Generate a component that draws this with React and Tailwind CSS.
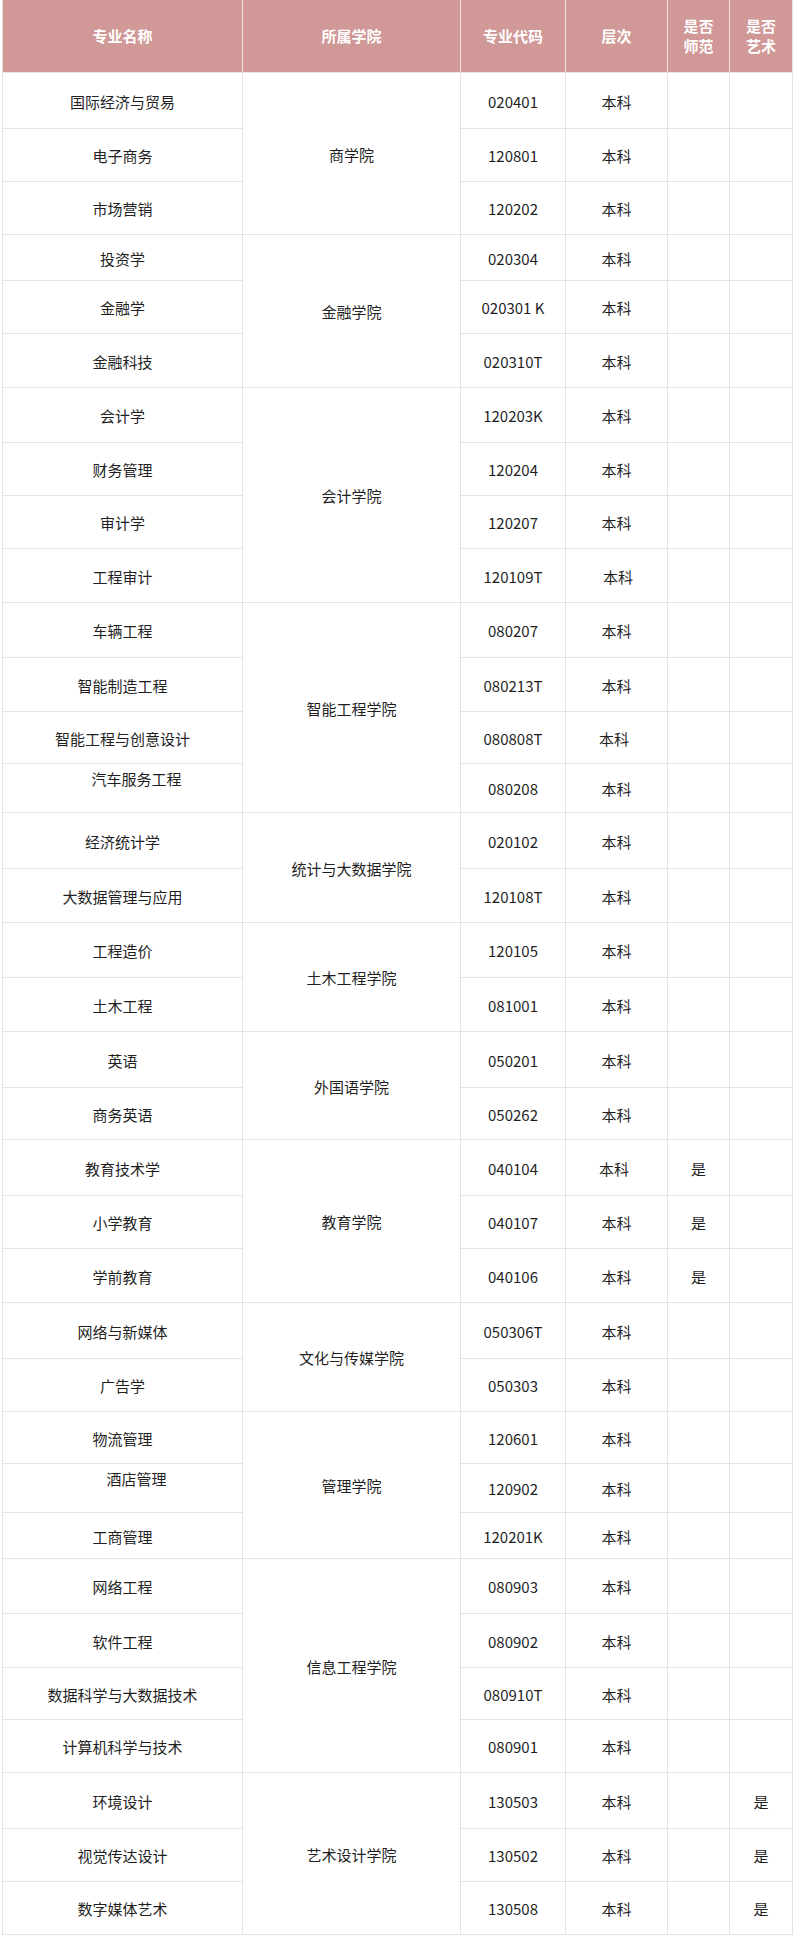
import React from "react";

// 学院分组：[专业名称, 专业代码, 行高, 师范, 艺术, 名称偏移, 层次偏移]
const groups = [
  {
    college: "商学院",
    rows: [
      { name: "国际经济与贸易", code: "020401", h: 56 },
      { name: "电子商务", code: "120801", h: 53 },
      { name: "市场营销", code: "120202", h: 53 },
    ],
  },
  {
    college: "金融学院",
    rows: [
      { name: "投资学", code: "020304", h: 46 },
      { name: "金融学", code: "020301 K", h: 53 },
      { name: "金融科技", code: "020310T", h: 54 },
    ],
  },
  {
    college: "会计学院",
    rows: [
      { name: "会计学", code: "120203K", h: 55 },
      { name: "财务管理", code: "120204", h: 53 },
      { name: "审计学", code: "120207", h: 53 },
      { name: "工程审计", code: "120109T", h: 54, levelShift: "pl-[3px]" },
    ],
  },
  {
    college: "智能工程学院",
    rows: [
      { name: "车辆工程", code: "080207", h: 55 },
      { name: "智能制造工程", code: "080213T", h: 54 },
      { name: "智能工程与创意设计", code: "080808T", h: 52, levelShift: "pr-[5px]" },
      { name: "汽车服务工程", code: "080208", h: 49, nameShift: "pl-[28px] pb-[20px]" },
    ],
  },
  {
    college: "统计与大数据学院",
    rows: [
      { name: "经济统计学", code: "020102", h: 56 },
      { name: "大数据管理与应用", code: "120108T", h: 54 },
    ],
  },
  {
    college: "土木工程学院",
    rows: [
      { name: "工程造价", code: "120105", h: 55 },
      { name: "土木工程", code: "081001", h: 54 },
    ],
  },
  {
    college: "外国语学院",
    rows: [
      { name: "英语", code: "050201", h: 56 },
      { name: "商务英语", code: "050262", h: 52 },
    ],
  },
  {
    college: "教育学院",
    rows: [
      { name: "教育技术学", code: "040104", h: 56, teacher: true, levelShift: "pr-[5px]" },
      { name: "小学教育", code: "040107", h: 53, teacher: true },
      { name: "学前教育", code: "040106", h: 54, teacher: true },
    ],
  },
  {
    college: "文化与传媒学院",
    rows: [
      { name: "网络与新媒体", code: "050306T", h: 56 },
      { name: "广告学", code: "050303", h: 53 },
    ],
  },
  {
    college: "管理学院",
    rows: [
      { name: "物流管理", code: "120601", h: 52 },
      { name: "酒店管理", code: "120902", h: 49, nameShift: "pl-[28px] pb-[20px]" },
      { name: "工商管理", code: "120201K", h: 46 },
    ],
  },
  {
    college: "信息工程学院",
    rows: [
      { name: "网络工程", code: "080903", h: 55 },
      { name: "软件工程", code: "080902", h: 54 },
      { name: "数据科学与大数据技术", code: "080910T", h: 52 },
      { name: "计算机科学与技术", code: "080901", h: 53 },
    ],
  },
  {
    college: "艺术设计学院",
    rows: [
      { name: "环境设计", code: "130503", h: 56, art: true },
      { name: "视觉传达设计", code: "130502", h: 53, art: true },
      { name: "数字媒体艺术", code: "130508", h: 53, art: true },
    ],
  },
];

const td = "border border-[#e9e0e0] text-center align-middle p-0";

const App = () => {
  return (
    <div className="min-h-[1958px] bg-white pl-[2px] pt-0 font-['Noto_Sans_CJK_SC','Noto_Sans',sans-serif] text-[15px] text-[#1f1f1f]">
      <table className="w-[790px] table-fixed border-collapse">
        <colgroup>
          <col className="w-[240px]" />
          <col className="w-[218px]" />
          <col className="w-[105px]" />
          <col className="w-[102px]" />
          <col className="w-[62px]" />
          <col className="w-[63px]" />
        </colgroup>
        <thead>
          <tr className="h-[72px] bg-[#d09896] text-white font-bold">
            <th className="border border-[#efe3e3] border-t-0 border-l-[#e9e0e0]">专业名称</th>
            <th className="border border-[#efe3e3] border-t-0">所属学院</th>
            <th className="border border-[#efe3e3] border-t-0">专业代码</th>
            <th className="border border-[#efe3e3] border-t-0">层次</th>
            <th className="border border-[#efe3e3] border-t-0 leading-[20px]">
              是否
              <br />
              师范
            </th>
            <th className="border border-[#efe3e3] border-t-0 leading-[20px]">
              是否
              <br />
              艺术
            </th>
          </tr>
        </thead>
        <tbody>
          {groups.map((g) =>
            g.rows.map((r, i) => (
              <tr key={r.name} style={{ height: r.h }}>
                <td className={`${td} pt-[4px] ${r.nameShift || ""}`}>{r.name}</td>
                {i === 0 && (
                  <td className={`${td} pt-[4px]`} rowSpan={g.rows.length}>
                    {g.college}
                  </td>
                )}
                <td className={`${td} pt-[4px] whitespace-nowrap`}>{r.code}</td>
                <td className={`${td} pt-[4px] ${r.levelShift || ""}`}>本科</td>
                <td className={`${td} pt-[4px]`}>{r.teacher ? "是" : ""}</td>
                <td className={`${td} pt-[4px]`}>{r.art ? "是" : ""}</td>
              </tr>
            ))
          )}
        </tbody>
      </table>
    </div>
  );
};

export default App;
